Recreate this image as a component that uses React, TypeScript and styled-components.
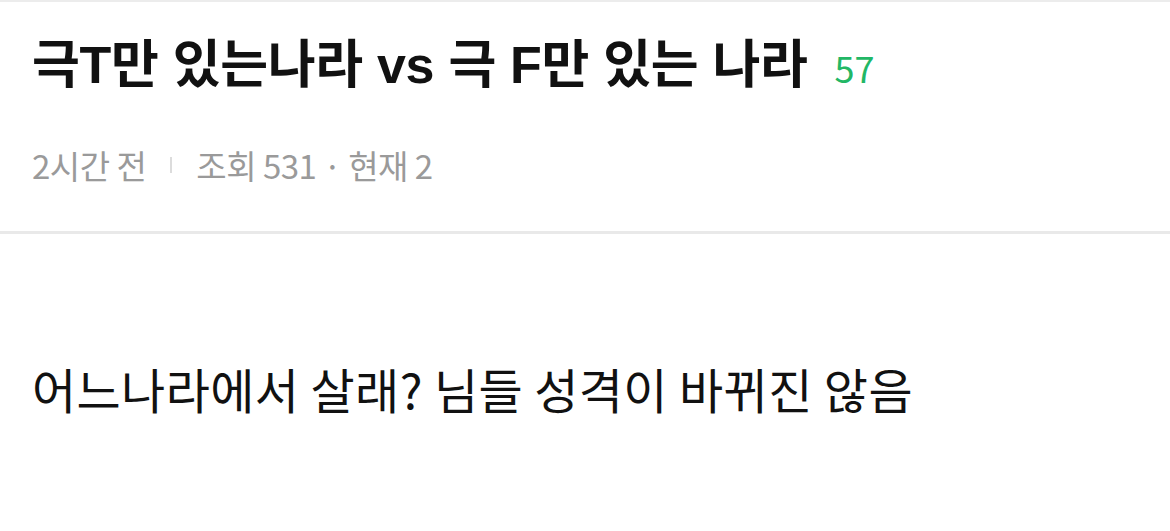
import styled, { createGlobalStyle } from "styled-components";

const GlobalStyle = createGlobalStyle`
  body {
    margin: 0;
    background: #fff;
    font-family: "Liberation Sans", "Noto Sans CJK KR", sans-serif;
  }
`;

const Page = styled.div`
  border-top: 2px solid #ececec;
`;

const Header = styled.header`
  padding: 33px 32px 0;
  height: 232px;
  box-sizing: border-box;
  border-bottom: 3px solid #e9e9e9;
`;

const TitleRow = styled.div`
  display: flex;
  align-items: baseline;
  gap: 27px;
`;

const Title = styled.h1`
  margin: 0;
  font-size: 52px;
  line-height: 60px;
  font-weight: 700;
  color: #111;
  letter-spacing: -0.3px;
`;

const Count = styled.span`
  font-family: "Noto Sans CJK KR", sans-serif;
  font-size: 36px;
  color: #22b765;
`;

const Meta = styled.div`
  margin-top: 50px;
  display: flex;
  align-items: center;
  font-family: "Noto Sans CJK KR", sans-serif;
  font-size: 33px;
  line-height: 40px;
  color: #9a9a9a;
  letter-spacing: -0.5px;
`;

const Divider = styled.span`
  width: 2px;
  height: 16px;
  background: #dcdcdc;
  margin: 0 24px;
`;

const Body = styled.p`
  margin: 124px 32px 0;
  font-family: "Noto Sans CJK KR", sans-serif;
  font-size: 48px;
  line-height: 60px;
  color: #111;
  letter-spacing: 0.4px;
`;

export default function App() {
  return (
    <Page>
      <GlobalStyle />
      <Header>
        <TitleRow>
          <Title>극T만 있는나라 vs 극 F만 있는 나라</Title>
          <Count>57</Count>
        </TitleRow>
        <Meta>
          2시간 전
          <Divider />
          조회 531 · 현재 2
        </Meta>
      </Header>
      <Body>어느나라에서 살래? 님들 성격이 바뀌진 않음</Body>
    </Page>
  );
}
